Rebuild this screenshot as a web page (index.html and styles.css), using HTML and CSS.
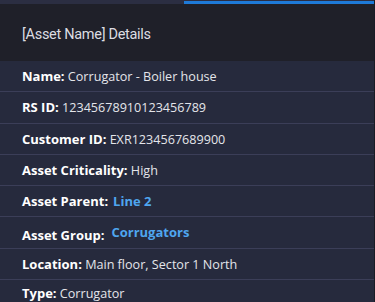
FILE: index.html
```html
<!DOCTYPE html>
<html>
<head>
<meta charset="utf-8">
<link rel="stylesheet" href="styles.css">
</head>
<body>
<div class="panel">
  <div class="topbar"><div class="progress"></div></div>
  <div class="header"><h1 class="title">[Asset Name] Details</h1></div>
  <ul class="details">
    <li class="row"><span class="label">Name:</span> <span class="value">Corrugator - Boiler house</span></li>
    <li class="row"><span class="label">RS ID:</span> <span class="value">12345678910123456789</span></li>
    <li class="row"><span class="label">Customer ID:</span> <span class="value">EXR1234567689900</span></li>
    <li class="row"><span class="label">Asset Criticality:</span> <span class="value">High</span></li>
    <li class="row"><span class="label">Asset Parent:</span><a class="link">Line 2</a></li>
    <li class="row"><span class="label">Asset Group:</span><a class="link raised">Corrugators</a></li>
    <li class="row"><span class="label">Location:</span> <span class="value">Main floor, Sector 1 North</span></li>
    <li class="row last"><span class="label">Type:</span> <span class="value">Corrugator</span></li>
  </ul>
</div>
</body>
</html>
```
FILE: styles.css
```css
html, body {
  margin: 0;
  padding: 0;
  background: #262a3d;
  overflow: hidden;
}
.panel {
  width: 375px;
  height: 302px;
  box-sizing: border-box;
  border-right: 1px solid #1a1c26;
  background: #262a3d;
  font-family: "Open Sans", sans-serif;
}
.topbar {
  height: 4px;
  background: #2b2e42;
  display: flex;
  justify-content: flex-end;
  align-items: flex-start;
}
.progress {
  width: 190px;
  height: 3px;
  margin-top: 1px;
  background: #1e7ad8;
}
.header {
  height: 57px;
  box-sizing: border-box;
  padding: 4px 0 0 22px;
  background: #1f2029;
  display: flex;
  align-items: center;
}
.title {
  margin: 0;
  font-family: Roboto, sans-serif;
  font-weight: 400;
  font-size: 14.5px;
  color: #dcdde2;
  letter-spacing: -0.3px;
}
.details {
  list-style: none;
  margin: 0;
  padding: 0;
}
.row {
  height: 30.3px;
  line-height: 30.3px;
  border-bottom: 1px solid #3b3e58;
  padding-left: 22px;
  font-size: 12.6px;
  color: #e4e5ea;
  white-space: nowrap;
}
.row.last {
  line-height: 26px;
}
.label {
  font-size: 13px;
  font-weight: 700;
  color: #ffffff;
}
.value {
  color: #e4e5ea;
}
.link {
  margin-left: 5px;
  font-size: 13px;
  font-weight: 700;
  color: #4fa6ef;
}
.raised {
  margin-left: 7px;
  vertical-align: 3px;
}
```
